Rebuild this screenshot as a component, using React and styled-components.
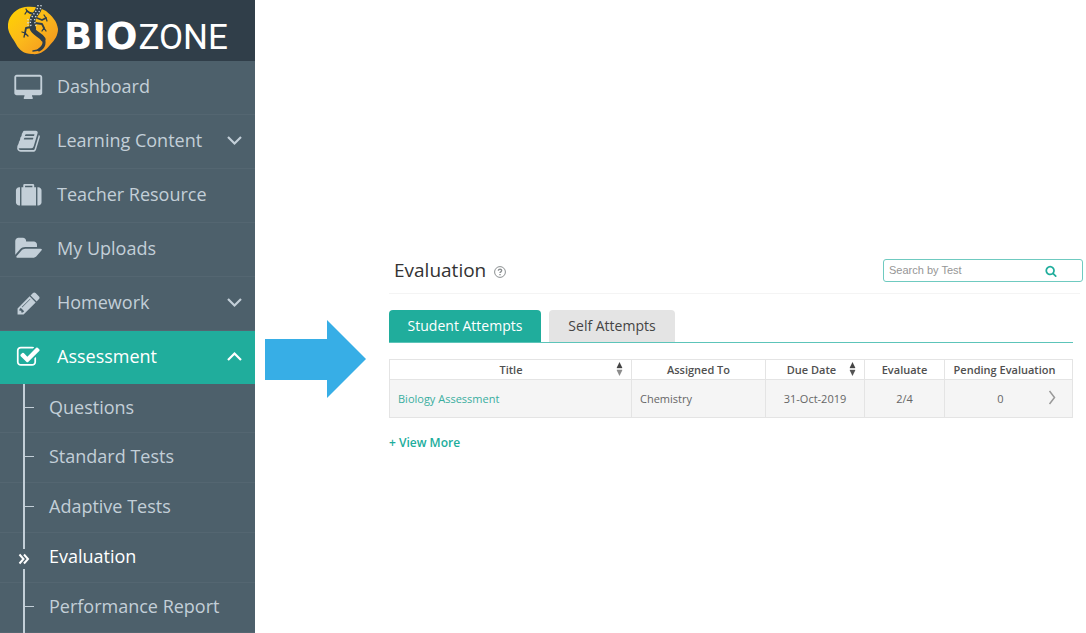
import React from "react";
import styled, { createGlobalStyle } from "styled-components";

const teal = "#20ad9c";
const slate = "#4d606b";
const pale = "#c3cfd8";

const GlobalStyle = createGlobalStyle`
  *, *::before, *::after { box-sizing: border-box; }
  body {
    margin: 0;
    background: #fff;
    color: #333;
    font-family: "Open Sans", "Noto Sans", sans-serif;
  }
  a { text-decoration: none; color: inherit; }
  ul { list-style: none; margin: 0; padding: 0; }
  button { font: inherit; border: 0; background: none; padding: 0; cursor: pointer; }
`;

const Page = styled.div`
  display: flex;
  align-items: flex-start;
  min-height: 100vh;
`;

/* ---------- Sidebar ---------- */

const Sidebar = styled.aside`
  flex: 0 0 255px;
  align-self: stretch;
  background: ${slate};
  color: ${pale};
`;

const Brand = styled.a`
  display: flex;
  align-items: center;
  height: 61px;
  padding: 0 8px;
  background: #303e49;
  color: #fff;
`;

const BrandMark = styled.svg`
  flex: none;
  width: 51px;
  height: 54px;
`;

const BrandName = styled.span`
  display: flex;
  align-items: baseline;
  margin-left: 5px;
  padding-top: 13px;
  line-height: 50px;
`;

const BrandHeavy = styled.span`
  font-family: "DejaVu Sans", sans-serif;
  font-size: 37px;
  font-weight: 700;
`;

const BrandLight = styled.span`
  margin-left: 1px;
  font-family: Roboto, sans-serif;
  font-size: 35px;
`;

const NavButton = styled.button`
  display: flex;
  align-items: center;
  width: 100%;
  height: ${(p) => (p.$active ? 53 : 54)}px;
  padding: 0 12px 4px 14px;
  border-bottom: ${(p) => (p.$active ? "0" : "1px solid #546671")};
  background: ${(p) => (p.$active ? teal : "transparent")};
  color: ${(p) => (p.$active ? "#fff" : pale)};
  font-size: 18px;
  line-height: 26px;
  text-align: left;
`;

const IconSlot = styled.span`
  display: flex;
  flex: 0 0 43px;
  svg { height: 26px; width: 29px; fill: currentColor; }
`;

const NavLabel = styled.span`
  flex: 1;
`;

const Caret = styled.svg`
  width: 17px;
  height: 12px;
  fill: none;
  stroke: currentColor;
  stroke-width: 2.2;
`;

const SubLink = styled.a`
  display: flex;
  height: 50px;
  padding-left: 18px;
  border-bottom: 1px solid #546671;
  color: ${(p) => (p.$active ? "#fff" : pale)};
  font-size: 18px;
  line-height: 46px;
  li:first-child > & { height: 49px; }
`;

const Branch = styled.span`
  display: flex;
  align-items: center;
  flex: 0 0 11px;
  height: 50px;
  margin: 0 15px 0 5px;
  border-left: 2px solid ${pale};
  &::after {
    content: "";
    width: 9px;
    height: 1px;
    margin-bottom: 4px;
    background: ${pale};
  }
`;

const ActiveBranch = styled.span`
  display: flex;
  flex-direction: column;
  align-items: center;
  flex: 0 0 12px;
  height: 50px;
  margin-right: 19px;
  &::before, &::after {
    content: "";
    width: 2px;
    background: ${pale};
  }
  &::before { height: 16px; }
  &::after { flex: 1; }
  svg { width: 12px; height: 20px; fill: none; stroke: #fff; stroke-width: 2; }
`;

/* ---------- Pointer ---------- */

const Pointer = styled.svg`
  flex: 0 0 102px;
  height: 80px;
  margin: 319px 22px 0 10px;
  fill: #37aee6;
`;

/* ---------- Evaluation panel ---------- */

const Main = styled.main`
  flex: 1;
  min-width: 0;
  padding: 255px 3px 24px 0;
`;

const PanelHeader = styled.header`
  display: flex;
  align-items: center;
  height: 39px;
  padding: 0 0 8px 5px;
  margin-right: 3px;
  border-bottom: 1px solid #f4f4f4;
`;

const Title = styled.h1`
  margin: 0 8px 0 0;
  color: #333;
  font-size: 19px;
  font-weight: 400;
  line-height: 30px;
`;

const HelpButton = styled.button`
  display: flex;
  margin-top: 4px;
  color: #8b8f91;
  svg { width: 12px; height: 12px; }
`;

const SearchBox = styled.form`
  display: flex;
  align-items: center;
  width: 200px;
  height: 23px;
  margin: 0 -3px 0 auto;
  padding: 0 25px 0 5px;
  border: 1px solid #6fcac0;
  border-radius: 3px;
`;

const SearchInput = styled.input`
  flex: 1;
  min-width: 0;
  padding: 0;
  border: 0;
  outline: 0;
  background: none;
  font-family: "Liberation Sans", Arial, sans-serif;
  font-size: 11px;
  line-height: 16px;
  color: #444;
  &::placeholder { color: #969696; opacity: 1; }
`;

const SearchButton = styled.button`
  display: flex;
  margin-top: 2px;
  color: ${teal};
  svg { width: 12px; height: 12px; fill: currentColor; }
`;

const Content = styled.div`
  margin-right: 10px;
`;

const Tabs = styled.div`
  display: flex;
  gap: 8px;
  margin-top: 16px;
  border-bottom: 1px solid #5cc4b9;
`;

const Tab = styled.button`
  width: ${(p) => p.$width}px;
  height: 32px;
  border-radius: 4px 4px 0 0;
  background: ${(p) => (p.$active ? teal : "#e4e4e4")};
  color: ${(p) => (p.$active ? "#fff" : "#444")};
  font-size: 14px;
  line-height: 20px;
`;

const Table = styled.table`
  width: 100%;
  margin-top: 16px;
  border-collapse: collapse;
  table-layout: fixed;
  font-size: 11px;
  line-height: 16px;
`;

const Col = styled.col`
  width: ${(p) => (p.$width ? `${p.$width}px` : "auto")};
`;

const HeadCell = styled.th`
  height: 20px;
  padding: 0;
  border: 1px solid #e4e4e4;
  color: #505050;
  font-weight: 600;
`;

const HeadInner = styled.span`
  display: flex;
  align-items: center;
  justify-content: center;
  padding: 0 ${(p) => p.$right || 8}px 0 ${(p) => p.$left || 8}px;
`;

const HeadLabel = styled.span`
  flex: 1;
  white-space: nowrap;
`;

const SortButton = styled.button`
  display: flex;
  margin-bottom: 2px;
  svg { width: 7px; height: 14px; }
`;

const Cell = styled.td`
  height: 38px;
  padding: 0 8px;
  border: 1px solid #e4e4e4;
  background: #f5f5f5;
  color: #666;
  text-align: ${(p) => p.$align || "left"};
`;

const TealLink = styled.a`
  && { color: #3aae9f; }
`;

const OpenCell = styled.span`
  display: grid;
  grid-template-columns: 1fr auto 1fr;
  align-items: center;
`;

const OpenButton = styled.button`
  grid-column: 3;
  display: flex;
  justify-self: end;
  margin: 0 8px 3px 0;
  svg { width: 8px; height: 15px; fill: none; stroke: #999; stroke-width: 1.5; }
`;

const OpenValue = styled.span`
  grid-column: 2;
  padding-right: 16px;
`;

const MoreLink = styled.a`
  && { color: ${teal}; }
  display: inline-block;
  margin-top: 16px;
  font-size: 12px;
  font-weight: 600;
  line-height: 18px;
`;

/* ---------- Data ---------- */

const icons = {
  desktop: {
    box: "0 0 1984 1792",
    d: "M1728 992v-832q0-13-9.5-22.5t-22.5-9.5h-1600q-13 0-22.5 9.5t-9.5 22.5v832q0 13 9.5 22.5t22.5 9.5h1600q13 0 22.5-9.5t9.5-22.5zm128-832v1088q0 66-47 113t-113 47h-544q0 37 16 77.5t32 71 16 43.5q0 26-19 45t-45 19h-512q-26 0-45-19t-19-45q0-14 16-44t32-70 16-78h-544q-66 0-113-47t-47-113v-1088q0-66 47-113t113-47h1600q66 0 113 47t47 113z",
    shift: "translate(80 128)",
  },
  book: {
    box: "-140 -70 2112 1908",
    d: "M1703 478q40 57 18 129l-275 906q-19 64-76.5 107.5t-122.5 43.5h-923q-77 0-148.5-53.5t-99.5-131.5q-24-67-2-127 0-4 3-27t4-37q1-8-3-21.5t-3-19.5q2-11 8-21t16.5-23.5 16.5-23.5q23-38 45-91.5t30-91.5q3-10 .5-30t-.5-28q3-11 17-28t17-23q21-36 42-92t25-90q1-9-2.5-32t.5-28q4-13 22-30.5t22-22.5q19-26 42.5-84.5t27.5-96.5q1-8-3-25.5t-2-26.5q2-8 9-18t18-23 17-21q8-12 16.5-30.5t15-35 16-36 19.5-32 26.5-23.5 36-11.5 47.5 5.5l-1 3q38-9 51-9h761q74 0 114 56t18 130l-274 906q-36 119-71.5 153.5t-128.5 34.5h-869q-27 0-38 15-11 16-1 43 24 70 144 70h923q29 0 56-15.5t35-41.5l300-987q7-22 5-57 38 15 59 43zm-1064 2q-4 13 2 22.5t20 9.5h608q13 0 25.5-9.5t16.5-22.5l21-64q4-13-2-22.5t-20-9.5h-608q-13 0-25.5 9.5t-16.5 22.5zm-83 256q-4 13 2 22.5t20 9.5h608q13 0 25.5-9.5t16.5-22.5l21-64q4-13-2-22.5t-20-9.5h-608q-13 0-25.5 9.5t-16.5 22.5z",
    shift: "translate(20 80)",
  },
  suitcase: {
    box: "-128 0 2016 1821",
    d: "M640 256h512v-128h-512v128zm-352 0v1408h-64q-92 0-158-66t-66-158v-960q0-92 66-158t158-66h64zm1120 0v1408h-1024v-1408h128v-160q0-40 28-68t68-28h576q40 0 68 28t28 68v160h128zm384 224v960q0 92-66 158t-158 66h-64v-1408h64q92 0 158 66t66 158z",
    shift: "translate(0 210) scale(1 .9)",
  },
  folder: {
    box: "-64 0 2048 1792",
    d: "M1943 952q0 31-31 66l-336 396q-43 51-120.5 86.5t-143.5 35.5h-1088q-34 0-60.5-13t-26.5-43q0-31 31-66l336-396q43-51 120.5-86.5t143.5-35.5h1088q34 0 60.5 13t26.5 43zm-343-344v160h-832q-94 0-197 47.5t-164 119.5l-337 396-5 6q0-4-.5-12.5t-.5-12.5v-960q0-92 66-158t158-66h320q92 0 158 66t66 158v32h544q92 0 158 66t66 158z",
    shift: "translate(-40 50)",
  },
  pencil: {
    box: "0 0 1984 1792",
    d: "M491 1536l91-91-235-235-91 91v107h128v128h107zm523-928q0-22-22-22-10 0-17 7l-542 542q-7 7-7 17 0 22 22 22 10 0 17-7l542-542q7-7 7-17zm-54-192l416 416-832 832h-416v-416zm683 96q0 53-37 90l-166 166-416-416 166-165q36-38 90-38 53 0 91 38l235 234q37 39 37 91z",
    shift: "translate(110 90)",
  },
  check: {
    box: "-140 -70 2112 1908",
    d: "M1472 930v318q0 119-84.5 203.5t-203.5 84.5h-832q-119 0-203.5-84.5t-84.5-203.5v-832q0-119 84.5-203.5t203.5-84.5h832q63 0 117 25 15 7 18 23 3 17-9 29l-49 49q-10 10-23 10-3 0-9-2-23-6-45-6h-832q-66 0-113 47t-47 113v832q0 66 47 113t113 47h832q66 0 113-47t47-113v-254q0-13 9-22l64-64q10-10 23-10 6 0 12 3 20 8 20 29zm231-489l-814 814q-24 24-57 24t-57-24l-430-430q-24-24-24-57t24-57l110-110q24-24 57-24t57 24l263 263 647-647q24-24 57-24t57 24l110 110q24 24 24 57t-24 57z",
    shift: "translate(0 70)",
  },
};

const navItems = [
  { label: "Dashboard", icon: "desktop" },
  { label: "Learning Content", icon: "book", caret: true },
  { label: "Teacher Resource", icon: "suitcase" },
  { label: "My Uploads", icon: "folder" },
  { label: "Homework", icon: "pencil", caret: true },
  { label: "Assessment", icon: "check", caret: true, active: true },
];

const subItems = [
  { label: "Questions" },
  { label: "Standard Tests" },
  { label: "Adaptive Tests" },
  { label: "Evaluation", active: true },
  { label: "Performance Report" },
];

const columns = [
  { label: "Title", sortable: true, left: 16, lower: "#8c8c8c" },
  { label: "Assigned To", width: 134 },
  { label: "Due Date", width: 99, sortable: true, lower: "#555" },
  { label: "Evaluate", width: 80 },
  { label: "Pending Evaluation", width: 128, right: 16 },
];

function NavIcon({ name }) {
  const icon = icons[name];
  return (
    <svg viewBox={icon.box} aria-hidden="true">
      <path d={icon.d} transform={icon.shift} />
    </svg>
  );
}

function GeckoMark() {
  return (
    <BrandMark viewBox="0 0 51 54" aria-hidden="true">
      <defs>
        <linearGradient id="sun" x1="0" y1="0" x2="1" y2="1">
          <stop offset="0" stopColor="#ffd400" />
          <stop offset="0.5" stopColor="#fbb81b" />
          <stop offset="1" stopColor="#f39020" />
        </linearGradient>
      </defs>
      <path
        d="M17 3C9 4 1 11 0 20c-1 8 4 13 8 20 3 6 8 10 16 10 8 1 13-3 18-9 5-5 8-10 8-16-1-8-6-13-12-18C32 3 24 2 17 3z"
        fill="url(#sun)"
      />
      <g fill="none" stroke="#303e49" strokeLinecap="round" strokeLinejoin="round">
        <path d="M31 4c-1 4-4 6-6 10-1 4-1 7 0 10" strokeWidth="6" />
        <path d="M24 24c2 6 8 6 11 11" strokeWidth="5" />
        <path d="M34 33c4 5 2 10-3 13" strokeWidth="3" />
        <path d="M36 38c0 5-5 9-11 9" strokeWidth="1.6" />
        <path d="M27 10l-5-1-3-2M29 14l5 2 4-2M23 23l-5 1-1 5M27 19l7 1 2 4" strokeWidth="1.8" />
        <path d="M14 28l3 1-1 4M20 32l-3-3M34 27l2-3 2 3M17 10l2-3-1-2M36 11l2 3 1 3" strokeWidth="1.3" />
      </g>
      <g fill="none" stroke="#d5dce1" strokeWidth="1.4" strokeDasharray="1.3 1.8">
        <path d="M30 1c0 5-4 8-6 12-2 4-2 6-1 9" />
        <path d="M33 1c0 6-4 9-6 13-1 3 0 5 1 8" />
        <path d="M20 15v7" />
      </g>
    </BrandMark>
  );
}

function SortIcon({ lower }) {
  return (
    <svg viewBox="0 0 7 14" aria-hidden="true">
      <path d="M3.5 0L6.4 6H.6z" fill="#444" />
      <path d="M3.5 14L6.4 8H.6z" fill={lower} />
      <path d="M.8 7h5.4" stroke="#bbb" strokeWidth="1" />
    </svg>
  );
}

export default function App() {
  return (
    <>
      <GlobalStyle />
      <Page>
        <Sidebar>
          <Brand href="#">
            <GeckoMark />
            <BrandName>
              <BrandHeavy>BIO</BrandHeavy>
              <BrandLight>ZONE</BrandLight>
            </BrandName>
          </Brand>
          <nav aria-label="Main">
            <ul>
              {navItems.map((item) => (
                <li key={item.label}>
                  <NavButton type="button" $active={item.active}>
                    <IconSlot>
                      <NavIcon name={item.icon} />
                    </IconSlot>
                    <NavLabel>{item.label}</NavLabel>
                    {item.caret && (
                      <Caret viewBox="0 0 17 12" aria-hidden="true">
                        <path d={item.active ? "M2 10l6.500-6.500 6.500 6.500" : "M2 3l6.500 6.500L15 3"} />
                      </Caret>
                    )}
                  </NavButton>
                </li>
              ))}
            </ul>
            <ul>
              {subItems.map((item) => (
                <li key={item.label}>
                  <SubLink href="#" $active={item.active}>
                    {item.active ? (
                      <ActiveBranch>
                        <svg viewBox="0 0 12 20" aria-hidden="true">
                          <path d="M1.500 5.500l4 4.500-4 4.500M6 5.500l4 4.500-4 4.500" />
                        </svg>
                      </ActiveBranch>
                    ) : (
                      <Branch />
                    )}
                    {item.label}
                  </SubLink>
                </li>
              ))}
            </ul>
          </nav>
        </Sidebar>

        <Pointer viewBox="0 0 102 80" aria-hidden="true">
          <path d="M0 20h62V1l39 39-39 39V61H0z" />
        </Pointer>

        <Main>
          <PanelHeader>
            <Title>Evaluation</Title>
            <HelpButton type="button" aria-label="Help">
              <svg viewBox="0 0 12 12" fill="none" stroke="currentColor">
                <circle cx="6" cy="6" r="5.4" strokeWidth="1" />
                <path d="M4.400 4.800c0-2.200 3.400-2.100 3.200 0C7.500 5.900 6 5.800 6 7.100M6 8v1.300" strokeWidth="1.400" />
              </svg>
            </HelpButton>
            <SearchBox role="search">
              <SearchInput type="text" placeholder="Search by Test" aria-label="Search by Test" />
              <SearchButton type="button" aria-label="Search">
                <svg viewBox="0 0 1792 1792">
                  <path d="M1216 832q0-185-131.500-316.500t-316.500-131.500-316.500 131.500-131.500 316.500 131.500 316.500 316.500 131.500 316.500-131.500 131.500-316.500zm512 832q0 52-38 90t-90 38q-54 0-90-38l-343-342q-179 124-399 124-143 0-273.500-55.500t-225-150-150-225-55.500-273.500 55.500-273.500 150-225 225-150 273.500-55.500 273.500 55.500 225 150 150 225 55.500 273.500q0 220-124 399l343 343q37 37 37 90z" />
                </svg>
              </SearchButton>
            </SearchBox>
          </PanelHeader>

          <Content>
            <Tabs role="tablist">
              <Tab type="button" role="tab" aria-selected="true" $active $width={152}>
                Student Attempts
              </Tab>
              <Tab type="button" role="tab" aria-selected="false" $width={126}>
                Self Attempts
              </Tab>
            </Tabs>

            <Table>
              <colgroup>
                {columns.map((c) => (
                  <Col key={c.label} $width={c.width} />
                ))}
              </colgroup>
              <thead>
                <tr>
                  {columns.map((c) => (
                    <HeadCell key={c.label} scope="col">
                      <HeadInner $left={c.left} $right={c.right}>
                        <HeadLabel>{c.label}</HeadLabel>
                        {c.sortable && (
                          <SortButton type="button" aria-label={`Sort by ${c.label}`}>
                            <SortIcon lower={c.lower} />
                          </SortButton>
                        )}
                      </HeadInner>
                    </HeadCell>
                  ))}
                </tr>
              </thead>
              <tbody>
                <tr>
                  <Cell>
                    <TealLink href="#">Biology Assessment</TealLink>
                  </Cell>
                  <Cell>Chemistry</Cell>
                  <Cell $align="center">31-Oct-2019</Cell>
                  <Cell $align="center">2/4</Cell>
                  <Cell $align="center">
                    <OpenCell>
                      <OpenValue>0</OpenValue>
                      <OpenButton type="button" aria-label="Open attempt">
                        <svg viewBox="0 0 8 15">
                          <path d="M1.500 1l5 6.500-5 6.500" />
                        </svg>
                      </OpenButton>
                    </OpenCell>
                  </Cell>
                </tr>
              </tbody>
            </Table>
            <MoreLink href="#">+ View More</MoreLink>
          </Content>
        </Main>
      </Page>
    </>
  );
}
